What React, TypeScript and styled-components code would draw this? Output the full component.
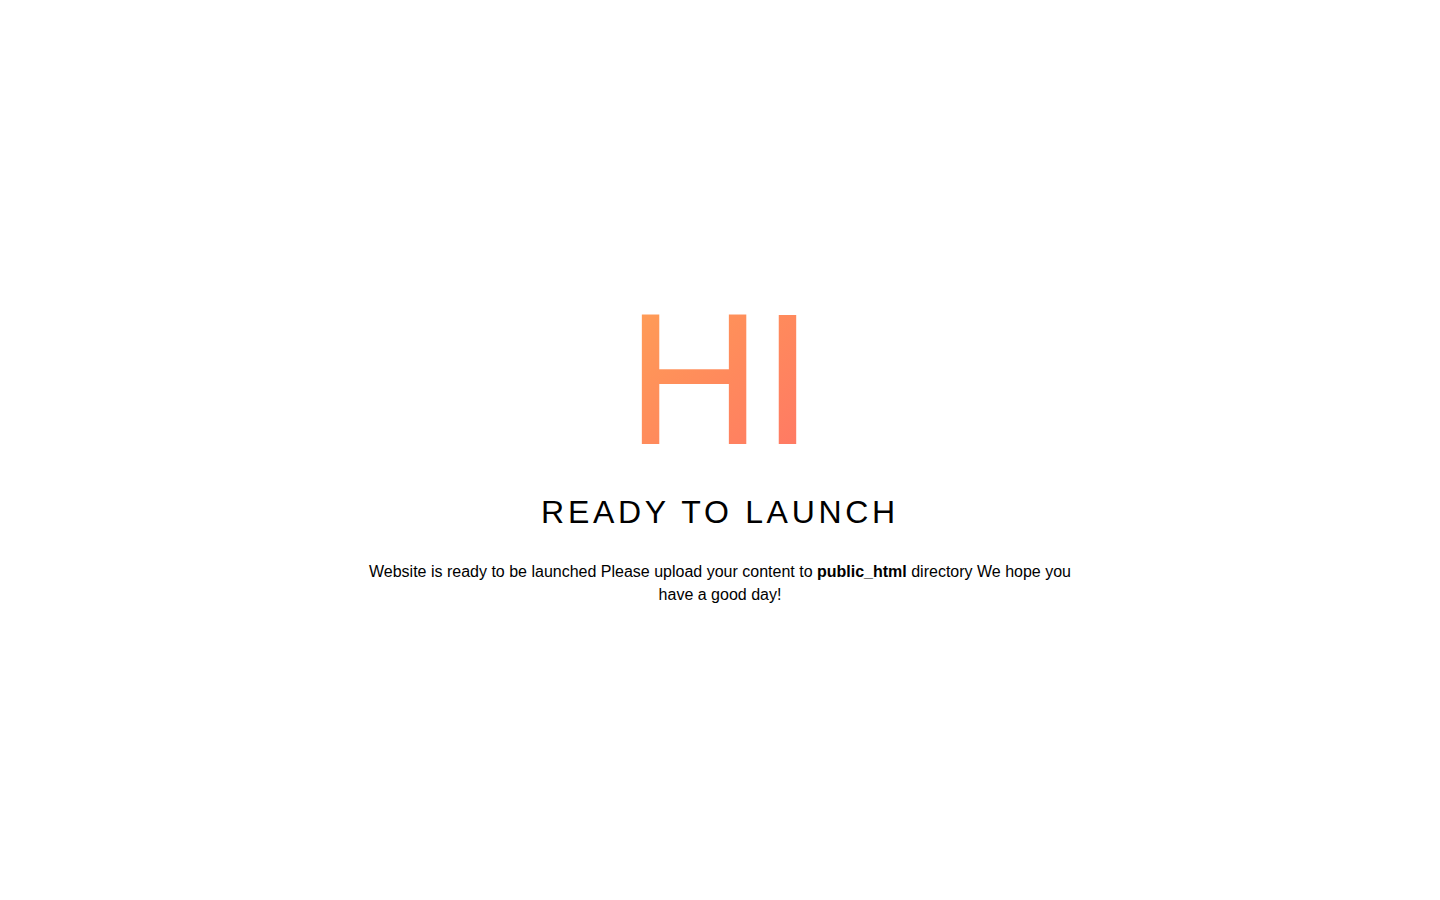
import React from "react";
import styled, { createGlobalStyle } from "styled-components";

const Global = createGlobalStyle`
  html, body { margin: 0; padding: 0; background: #ffffff; }
  body { font-family: "Liberation Sans", Arial, sans-serif; color: #000; }
`;

const Page = styled.main`
  min-height: 100vh;
  display: flex;
  flex-direction: column;
  align-items: center;
  justify-content: center;
  text-align: center;
  box-sizing: border-box;
  padding-bottom: 8px;
`;

const Hero = styled.div`
  font-size: 187px;
  line-height: 1;
  font-weight: 400;
  letter-spacing: 0;
  margin-bottom: 20px;
  background: linear-gradient(135deg, #ffa055 0%, #ff8a5c 50%, #ff7566 100%);
  -webkit-background-clip: text;
  background-clip: text;
  color: transparent;
`;

const Title = styled.h1`
  margin: 0 0 29px;
  font-size: 32px;
  line-height: 38.4px;
  font-weight: 400;
  letter-spacing: 3.7px;
  color: #000;
`;

const Body = styled.p`
  margin: 0;
  max-width: 720px;
  font-size: 16px;
  line-height: 23px;
  color: #000;
`;

export default function App() {
  return (
    <>
      <Global />
      <Page>
        <Hero>HI</Hero>
        <Title>READY TO LAUNCH</Title>
        <Body>
          Website is ready to be launched Please upload your content to <b>public_html</b> directory We hope you have a good day!
        </Body>
      </Page>
    </>
  );
}
